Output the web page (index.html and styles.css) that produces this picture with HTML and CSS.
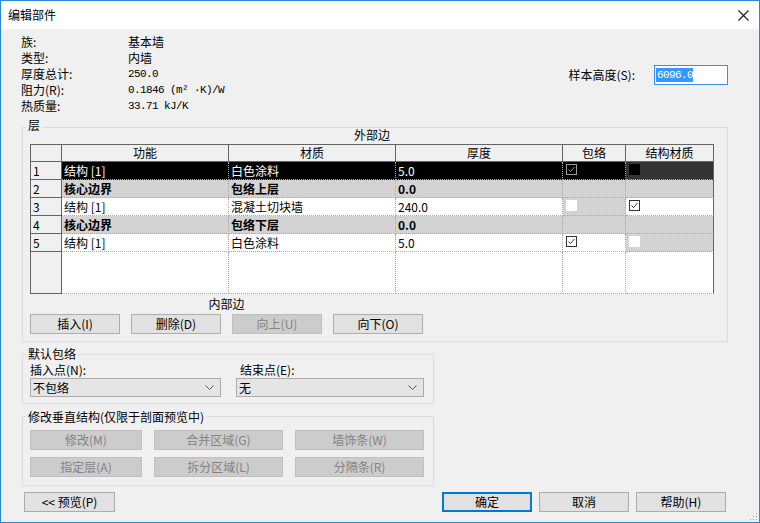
FILE: index.html
```html
<!DOCTYPE html>
<html lang="zh-CN">
<head>
<meta charset="utf-8">
<title>编辑部件</title>
<link rel="stylesheet" href="styles.css">
</head>
<body>
<div class="window">
  <div class="titlebar">
    <span class="title">编辑部件</span>
    <svg class="close" width="11" height="11" viewBox="0 0 11 11"><path d="M0.5 0.5 L10.5 10.5 M10.5 0.5 L0.5 10.5" stroke="#1a1a1a" stroke-width="1.1" fill="none"/></svg>
  </div>
  <div class="body">
    <div class="info">
      <div class="props">
        <span>族:</span><span>基本墙</span>
        <span>类型:</span><span>内墙</span>
        <span>厚度总计:</span><span class="mono">250.0</span>
        <span>阻力(R):</span><span class="mono">0.1846 (m² ·K)/W</span>
        <span>热质量:</span><span class="mono">33.71 kJ/K</span>
      </div>
      <div class="sample">
        <span class="sample-label">样本高度(S):</span>
        <div class="textbox"><span class="mono selected">6096.0</span></div>
      </div>
    </div>

    <div class="group g-layers">
      <div class="gtitle gtitle-layers">层</div>
      <div class="edge-label outer">外部边</div>
      <div class="grid">
        <div class="hd rn"></div>
        <div class="hd">功能</div>
        <div class="hd">材质</div>
        <div class="hd">厚度</div>
        <div class="hd">包络</div>
        <div class="hd last">结构材质</div>

        <div class="rn">1</div>
        <div class="c sel">结构 [1]</div>
        <div class="c sel">白色涂料</div>
        <div class="c sel">5.0</div>
        <div class="c sel"><span class="cb cb-dark"><svg width="9" height="9" viewBox="0 0 9 9"><path d="M1.5 4.5 L3.5 6.5 L7.5 2" stroke="#9a9a9a" stroke-width="1" fill="none"/></svg></span></div>
        <div class="c sel2 last"><span class="cb cb-black"></span></div>

        <div class="rn">2</div>
        <div class="c gray b">核心边界</div>
        <div class="c gray b">包络上层</div>
        <div class="c gray b">0.0</div>
        <div class="c gray"></div>
        <div class="c gray last"></div>

        <div class="rn">3</div>
        <div class="c">结构 [1]</div>
        <div class="c">混凝土切块墙</div>
        <div class="c">240.0</div>
        <div class="c gray"><span class="cb cb-blank"></span></div>
        <div class="c last"><span class="cb"><svg width="9" height="9" viewBox="0 0 9 9"><path d="M1.5 4.5 L3.5 6.5 L7.5 2" stroke="#333" stroke-width="1" fill="none"/></svg></span></div>

        <div class="rn">4</div>
        <div class="c gray b">核心边界</div>
        <div class="c gray b">包络下层</div>
        <div class="c gray b">0.0</div>
        <div class="c gray"></div>
        <div class="c gray last"></div>

        <div class="rn">5</div>
        <div class="c">结构 [1]</div>
        <div class="c">白色涂料</div>
        <div class="c">5.0</div>
        <div class="c"><span class="cb"><svg width="9" height="9" viewBox="0 0 9 9"><path d="M1.5 4.5 L3.5 6.5 L7.5 2" stroke="#333" stroke-width="1" fill="none"/></svg></span></div>
        <div class="c gray last"><span class="cb cb-blank"></span></div>

        <div class="rn"></div>
        <div class="c"></div>
        <div class="c"></div>
        <div class="c"></div>
        <div class="c"></div>
        <div class="c last"></div>
      </div>
      <div class="edge-label inner">内部边</div>
      <div class="btnrow">
        <button class="btn w90">插入(I)</button>
        <button class="btn w90">删除(D)</button>
        <button class="btn w90" disabled>向上(U)</button>
        <button class="btn w90">向下(O)</button>
      </div>
    </div>

    <div class="group g-small g-wrap">
      <div class="gtitle gtitle-wrap">默认包络</div>
      <div class="wrap-cols">
        <div class="wrap-col c1">
          <div class="field-label">插入点(N):</div>
          <div class="select"><span>不包络</span><svg width="9" height="6" viewBox="0 0 9 6"><path d="M0.5 0.5 L4.5 4.5 L8.5 0.5" stroke="#555" fill="none"/></svg></div>
        </div>
        <div class="wrap-col c2">
          <div class="field-label pad">结束点(E):</div>
          <div class="select"><span>无</span><svg width="9" height="6" viewBox="0 0 9 6"><path d="M0.5 0.5 L4.5 4.5 L8.5 0.5" stroke="#555" fill="none"/></svg></div>
        </div>
      </div>
    </div>

    <div class="group g-small g-vert">
      <div class="gtitle">修改垂直结构(仅限于剖面预览中)</div>
      <div class="vgrid">
        <button class="btn" disabled>修改(M)</button>
        <button class="btn" disabled>合并区域(G)</button>
        <button class="btn" disabled>墙饰条(W)</button>
        <button class="btn" disabled>指定层(A)</button>
        <button class="btn" disabled>拆分区域(L)</button>
        <button class="btn" disabled>分隔条(R)</button>
      </div>
    </div>

    <div class="footer">
      <button class="btn w91">&lt;&lt; 预览(P)</button>
      <div class="actions">
        <button class="btn w90 default">确定</button>
        <button class="btn w90">取消</button>
        <button class="btn w90">帮助(H)</button>
      </div>
    </div>
  </div>
  <svg class="grip" width="9" height="9" viewBox="0 0 9 9">
    <rect x="7" y="1" width="1" height="1" fill="#a0a0a0"/>
    <rect x="4" y="4" width="1" height="1" fill="#a0a0a0"/>
    <rect x="7" y="4" width="1" height="1" fill="#a0a0a0"/>
    <rect x="1" y="7" width="1" height="1" fill="#a0a0a0"/>
    <rect x="4" y="7" width="1" height="1" fill="#a0a0a0"/>
    <rect x="7" y="7" width="1" height="1" fill="#a0a0a0"/>
  </svg>
</div>
</body>
</html>
```
FILE: styles.css
```css
html, body {
  margin: 0;
  padding: 0;
}
body {
  font-family: "Noto Sans CJK SC", "Noto Sans", sans-serif;
  font-size: 12px;
  color: #000;
  background: #f0f0f0;
}
.window {
  position: relative;
  width: 760px;
  height: 523px;
  box-sizing: border-box;
  border: 1px solid #2b88d8;
  background: #f0f0f0;
  display: flex;
  flex-direction: column;
}
.titlebar {
  height: 28px;
  flex: none;
  background: #fff;
  display: flex;
  align-items: center;
  justify-content: space-between;
  padding: 0 10px 0 7px;
}
.title {
  line-height: 14px;
  color: #000;
}
.close {
  display: block;
  margin-top: 1px;
}
.body {
  padding-top: 5px;
}
.mono {
  font-family: "Liberation Mono", "Noto Sans CJK SC", monospace;
  font-size: 11px;
  letter-spacing: -0.6px;
}

/* info */
.info {
  display: flex;
  height: 80px;
  margin-bottom: 13px;
}
.props {
  display: grid;
  grid-template-columns: 107px auto;
  grid-auto-rows: 16px;
  line-height: 16px;
  padding-left: 20px;
}
.sample {
  margin-left: auto;
  margin-right: 31px;
  margin-top: 31px;
  height: 20px;
  display: flex;
  align-items: center;
}
.sample-label {
  margin-right: 19px;
  line-height: 14px;
}
.textbox {
  width: 74px;
  height: 20px;
  box-sizing: border-box;
  border: 1px solid #3c8ee0;
  background: #fff;
  display: flex;
  align-items: center;
  padding-left: 1px;
}
.selected {
  background: #3399ff;
  color: #fff;
  line-height: 14px;
  padding: 0 0 0 1px;
}

/* groups */
.group {
  border: 1px solid #dcdcdc;
  box-sizing: border-box;
  margin-left: 21px;
}
.gtitle {
  display: table;
  background: #f0f0f0;
  padding: 0 2px;
  margin-left: -4px;
  line-height: 14px;
  margin-top: -7px;
}
.gtitle-layers {
  margin-top: -10px;
  margin-bottom: -4px;
}
.gtitle-wrap {
  margin-top: -8px;
}
.g-layers {
  width: 706px;
  padding: 0 0 7px 7px;
}
.edge-label {
  line-height: 14px;
  text-align: center;
}
.edge-label.outer {
  width: 684px;
}
.edge-label.inner {
  width: 393px;
  margin-top: 3px;
}

/* layers grid */
.grid {
  margin-top: 2px;
  display: grid;
  grid-template-columns: 31px 167px 167px 167px 63px 88px;
  grid-template-rows: 17px repeat(5, 18px) 42px;
  width: 684px;
  box-sizing: border-box;
  border-left: 1px solid #646464;
  border-top: 1px solid #646464;
  background: #fff;
}
.grid > div {
  box-sizing: border-box;
  overflow: hidden;
  white-space: nowrap;
}
.hd {
  background: #f0f0f0;
  border-right: 1px solid #646464;
  border-bottom: 1px solid #646464;
  text-align: center;
  line-height: 16px;
}
.rn {
  background: #f0f0f0;
  border-right: 1px solid #646464;
  border-bottom: 1px solid #646464;
  padding-left: 2px;
  line-height: 17px;
}
.c {
  background: #fff;
  border-right: 1px dotted #a8a8a8;
  border-bottom: 1px dotted #a8a8a8;
  padding-left: 2px;
  line-height: 17px;
}
.c.last {
  border-right: 1px solid #646464;
}
.c.sel {
  background: #000;
  color: #fff;
}
.c.sel2 {
  background: #333;
}
.c.gray {
  background: #d3d3d3;
}
.c.b {
  font-weight: bold;
}
.cb {
  display: block;
  width: 11px;
  height: 11px;
  box-sizing: border-box;
  border: 1px solid #333;
  background: #fff;
  margin-top: 2px;
  margin-left: 1px;
}
.cb svg {
  display: block;
}
.cb-dark {
  background: #000;
  border-color: #9a9a9a;
}
.cb-black {
  background: #000;
  border-color: #000;
}
.cb-blank {
  border-color: #fff;
}

/* buttons */
.btn {
  font-family: "Noto Sans CJK SC", "Noto Sans", sans-serif;
  font-size: 12px;
  height: 20px;
  box-sizing: border-box;
  margin: 0;
  padding: 0;
  border: 1px solid #adadad;
  background: #e1e1e1;
  color: #000;
  line-height: 16px;
}
.btn:disabled {
  background: #cccccc;
  border-color: #bfbfbf;
  color: #838383;
}
.btn.default {
  border-color: #0078d7;
  box-shadow: inset 0 0 0 1px #0078d7;
}
.w90 {
  width: 90px;
}
.w91 {
  width: 91px;
}
.btnrow {
  display: flex;
  gap: 11px;
  margin-top: 3px;
}

/* default wrap */
.g-small {
  width: 412px;
  margin-top: 12px;
}
.g-wrap {
  padding: 0 0 6px 7px;
}
.wrap-cols {
  display: flex;
  gap: 15px;
  margin-top: 2px;
}
.wrap-col.c1 {
  width: 191px;
}
.wrap-col.c2 {
  width: 188px;
}
.field-label {
  line-height: 14px;
}
.field-label.pad {
  padding-left: 4px;
}
.select {
  margin-top: 1px;
  height: 19px;
  box-sizing: border-box;
  border: 1px solid #acacac;
  background: #e5e5e5;
  display: flex;
  align-items: center;
  justify-content: space-between;
  padding: 0 6px 0 2px;
  line-height: 14px;
}
.select svg {
  display: block;
}

/* vertical structure */
.g-vert {
  padding: 0 0 8px 7px;
}
.vgrid {
  margin-top: 6px;
  display: grid;
  grid-template-columns: 112px 129px 129px;
  grid-auto-rows: 20px;
  column-gap: 12px;
  row-gap: 7px;
}

/* footer */
.footer {
  margin-top: 6px;
  display: flex;
  padding-left: 23px;
}
.actions {
  margin-left: auto;
  margin-right: 33px;
  display: flex;
  gap: 7px;
}
.grip {
  position: absolute;
  right: 1px;
  bottom: 1px;
}
```
